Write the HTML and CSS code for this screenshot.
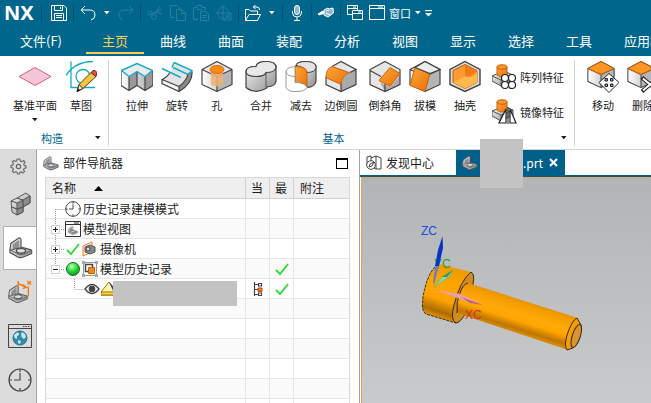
FILE: index.html
```
<!DOCTYPE html>
<html lang="zh-CN">
<head>
<meta charset="utf-8">
<title>NX</title>
<link rel="stylesheet" href="styles.css">
</head>
<body>
<svg class="defs" aria-hidden="true">
  <defs>
    <linearGradient id="metal" x1="0" y1="0" x2="1" y2="1"><stop offset="0" stop-color="#fafafa"/><stop offset="1" stop-color="#8e8e8e"/></linearGradient>
    <linearGradient id="side" x1="0" y1="0" x2="1" y2="0"><stop offset="0" stop-color="#fff"/><stop offset="1" stop-color="#a6a6a6"/></linearGradient>
    <linearGradient id="amber" x1="0" y1="0" x2="1" y2="1"><stop offset="0" stop-color="#ffa838"/><stop offset="1" stop-color="#e9700a"/></linearGradient>
    <radialGradient id="ball" cx=".4" cy=".3" r=".7"><stop offset="0" stop-color="#c8ffc8"/><stop offset=".5" stop-color="#2fe03c"/><stop offset="1" stop-color="#0a9a1a"/></radialGradient>
    <symbol id="bracket" viewBox="0 0 26 24">
      <path d="M1 14 2 7 11 1Q13 1 13 3V11L24 14Q25 15 24.500 18L15 22Q12 23 10 22L1 17Z" fill="url(#metal)" stroke="#555" stroke-width="1.300"/>
      <path d="M4 14V8L11 3 11 12Z" fill="#909090"/><path d="M2 14 11 12 13 11M1 14 11 19Q14 20 24 15" fill="none" stroke="#555"/>
      <ellipse cx="13" cy="15" rx="5" ry="2.500" fill="#ddd" stroke="#444" stroke-width="1.200"/>
    </symbol>
    <symbol id="cube" viewBox="0 0 32 32">
      <path d="M16 1 31 9V24L16 31 1 24V9Z" fill="url(#side)"/>
      <path d="M16 1 31 9 16 16 1 9Z" fill="#e8e8e8"/>
      <path d="M16 16V31L31 24V9Z" fill="#b5b5b5"/>
      <path d="M16 1 31 9V24L16 31 1 24V9ZM1 9 16 16 31 9M16 16V31" fill="none" stroke="#444" stroke-width="1.200" stroke-linejoin="round"/>
    </symbol>
    <symbol id="boss" viewBox="0 0 24 24">
      <path d="M0 12 12 7 21 11V16L9 22 0 17Z" fill="url(#metal)" stroke="#555"/>
      <path d="M0 12 9 16 21 11M9 16V22" fill="none" stroke="#555"/>
      <path d="M5 3V11Q10 15 15 11V3Z" fill="url(#amber)" stroke="#c8600a"/>
      <ellipse cx="10" cy="3" rx="5" ry="2.200" fill="#ff9526" stroke="#c8600a"/>
    </symbol>
    <symbol id="caret" viewBox="0 0 6 4"><path d="M0 0H5.500L2.800 3.200Z" fill="currentColor"/></symbol>
    <symbol id="tick" viewBox="0 0 16 16"><path d="M2 9 6 13 14 3" fill="none" stroke="#2fe03c" stroke-width="2"/></symbol>
    <symbol id="clock" viewBox="0 0 24 24"><circle cx="12" cy="12" r="11" fill="none" stroke="currentColor" stroke-width="1.200"/><path d="M12 1V4M12 20V23M1 12H4M20 12H23M12 5V12H6" fill="none" stroke="currentColor" stroke-width="1.200"/></symbol>
  </defs>
</svg>

<header class="top">
  <div class="quick">
    <span class="brand">NX</span>
    <span class="sep"></span>
    <button class="tool first" aria-label="保存"><svg viewBox="0 0 16 16"><path d="M.5.500H13L15.500 3V15.500H.500ZM3.500.500V5.500H11.500V.500M9.500 2V4M3.500 15V8.500H12.500V15M5 10.500H11M5 12.500H11"/></svg></button>
    <span class="sep"></span>
    <button class="tool" aria-label="撤销"><svg viewBox="0 0 16 16"><path d="M5 1 1 5 5 9M1 5H10Q15 5 15 10 15 14 11 15"/></svg></button>
    <button class="drop" aria-label="撤销列表"><svg><use href="#caret"/></svg></button>
    <button class="tool dim" aria-label="重做"><svg viewBox="0 0 16 16"><path d="M11 1 15 5 11 9M15 5H6Q1 5 1 10 1 14 5 15"/></svg></button>
    <span class="sep"></span>
    <button class="tool dim" aria-label="剪切"><svg viewBox="0 0 16 16"><path d="M15 4 6 8M13 1 8 9M9 7 15 9M6 8 5 8"/><circle cx="3" cy="8" r="2"/><circle cx="7" cy="12" r="2.500"/></svg></button>
    <button class="tool dim" aria-label="复制"><svg viewBox="0 0 16 16"><path d="M5 12.500H.500V.500H7L9.500 3V4M6.500 4.500H12L15.500 8V15.500H6.500ZM11.500 4.500V8.500H15"/></svg></button>
    <button class="tool dim" aria-label="粘贴"><svg viewBox="0 0 16 16"><path d="M5 14.500H.500V2.500H4V.500H9V2.500H12.500V5M3.500 4.500H9.500M7.500 6.500H12L15.500 9V15.500H7.500ZM9 10.500H14M9 12.500H14"/></svg></button>
    <button class="tool dim" aria-label="移动对象"><svg viewBox="0 0 16 16"><circle cx="7" cy="8" r="5.500"/><path d="M7 0V8H0M7 8H15V15H7Z"/><path d="M9 10 13 13M13 10V13H10"/></svg></button>
    <span class="sep"></span>
    <button class="tool" aria-label="打开"><svg viewBox="0 0 16 16"><path d="M.500 15.500V4.500H4L5.500 6H12.500V9M.500 15.500 4 9.500H15.500L12.500 15.500ZM8 2H12Q14.500 2 14.500 5M10.500 0 8.500 2 10.500 4"/></svg></button>
    <button class="drop" aria-label="打开列表"><svg><use href="#caret"/></svg></button>
    <span class="sep"></span>
    <button class="tool" aria-label="语音"><svg viewBox="0 0 16 16"><rect x="5.500" y=".5" width="5" height="9" rx="2.500" fill="#8fb9cb"/><path d="M3.500 6V8Q4 12 8 12T12.500 8V6M8 12V15.500M5 15.500H11"/></svg></button>
    <span class="sep"></span>
    <button class="tool" aria-label="触控"><svg viewBox="0 0 16 16"><path d="M0 9 5 6 7 8 1 10Z" fill="#fff"/><path d="M6 5 10 3 11 4 15 3 15.500 8 10 12 6 10Z" fill="#8fb9cb"/><path d="M8 6 11 5M8 8 12 10"/></svg></button>
    <span class="sep"></span>
    <button class="tool" aria-label="切换窗口"><svg viewBox="0 0 16 16"><path d="M5 9.500H.500V.500H10.500V5M.500 3.500H10M5.500 5.500H15.500V14.500H5.500ZM5.500 8.500H15M6 2H9M11 7H14"/></svg></button>
    <button class="window"><svg viewBox="0 0 16 16"><path d="M.500.500H15.500V14.500H.500ZM.500 3.500H15M9 2H14"/></svg>窗口<svg class="mini"><use href="#caret"/></svg></button>
    <button class="drop" aria-label="自定义"><svg class="over" viewBox="0 0 6 6"><path d="M0 .500H6" stroke="#fff"/><path d="M0 2.500H6L3 5.500Z" fill="#fff"/></svg></button>
  </div>
  <nav class="menu">
    <a href="#">文件(F)</a><a href="#" class="on">主页</a><a href="#">曲线</a><a href="#">曲面</a><a href="#">装配</a><a href="#">分析</a><a href="#">视图</a><a href="#">显示</a><a href="#">选择</a><a href="#">工具</a><a href="#">应用模块</a>
  </nav>
</header>

<section class="ribbon">
  <div class="group build">
    <div class="cmds">
      <button class="cmd wide"><svg viewBox="0 0 32 32"><path d="M0 16 16 7 32 16 16 25Z" fill="#f5c6d8" stroke="#d55c85"/></svg>基准平面<svg class="mini"><use href="#caret"/></svg></button>
      <button class="cmd"><svg viewBox="0 0 32 32"><path d="M1 15Q10 1 28 1M6 1V27H30" fill="none" stroke="#15aacb" stroke-width="1.300"/><circle cx="18" cy="16" r="7" fill="none" stroke="#15aacb" stroke-width="1.300"/><path d="M12 31 14 24 26 12 31 16 18 28Z" fill="#f5c542" stroke="#4a3b12"/><path d="M26 12 28 10Q30 9 32 12L31 16Z" fill="#e05050" stroke="#652020"/><path d="M12 31 14 24 18 28Z" fill="#f5e0b0" stroke="#333"/><path d="M12 31 13 28 15 30Z"/></svg>草图</button>
    </div>
    <div class="caption"><span>构造</span><svg class="mini"><use href="#caret"/></svg></div>
  </div>
  <div class="group basic">
    <div class="cmds">
      <div class="trio">
        <button class="cmd"><svg viewBox="0 0 32 32"><path d="M0 10 8 15 16 11 24 15 32 10V25L24 30 16 25 8 30 0 25Z" fill="url(#side)"/><path d="M8 16 16 11V25L8 30Z" fill="#999"/><path d="M24 16 32 10V25L24 30Z" fill="#999"/><path d="M0 10V25L8 30 16 25 24 30 32 25V10M8 16V30M16 11V25M24 16V30" fill="none" stroke="#444" stroke-width="1.200"/><path d="M.500 10 16 3 31.500 10 24 16 16 11 8 16Z" fill="#ececec" stroke="#15aacb" stroke-width="1.400"/></svg>拉伸</button>
        <button class="cmd"><svg viewBox="0 0 32 32"><path d="M13 2 31 10Q32 23 18 31L1 23V19Q12 14 13 2Z" fill="#e4e4e4"/><path d="M1 19 18 26V31L1 23Z" fill="#f6f6f6"/><path d="M31 11Q31 24 18 31V26Q26 20 27 13Z" fill="#8a8a8a"/><path d="M1 19 18 26Q26 20 27 13M18 26V31L1 23V19Q6 17 9 12M31 11Q32 23 18 31" fill="none" stroke="#444" stroke-width="1.200"/><path d="M1 8 20 17M12 7 27 14M13 2 31 10 27 14M13 2 11 7" fill="none" stroke="#15aacb" stroke-width="1.400"/></svg>旋转</button>
        <button class="cmd"><svg viewBox="0 0 32 32"><use href="#cube"/><path d="M10 10V24Q16 28 22 24V10Z" fill="#efb070" opacity=".85"/><ellipse cx="16" cy="9" rx="7" ry="4" fill="#ff8a12" stroke="#d96a05"/></svg>孔</button>
      </div>
      <div class="trio">
        <button class="cmd"><svg viewBox="0 0 32 32"><path d="M1 11Q1 6 11 6 12 1 21 1 31 1 31 7V21Q30 26 23 26L21 28Q10 34 1 27Z" fill="url(#metal)" stroke="#444" stroke-width="1.200"/><path d="M1 11Q1 6 11 6 12 1 21 1 31 1 31 7 30 12 21 12 20 16 11 16 1 16 1 11Z" fill="#e9e9e9" stroke="#444" stroke-width="1.200"/><path d="M21 12V27" stroke="#555"/></svg>合并</button>
        <button class="cmd"><svg viewBox="0 0 32 32"><path d="M11 5Q12 1 21 1 31 1 31 7V21Q30 26 23 27L11 16Z" fill="url(#metal)" stroke="#444" stroke-width="1.200"/><path d="M11 5Q12 1 21 1 31 1 31 7 30 12 22 12 22 7 11 5Z" fill="#e4e4e4" stroke="#444"/><path d="M10 6Q22 6 22 12V27Q20 22 10 22Z" fill="url(#amber)" stroke="#c8600a"/><path d="M10 6Q1 7 1 11V27Q4 32 11 31 20 31 22 27 20 22 10 22ZM1 11Q2 16 10 16" fill="#fff" stroke="#999"/></svg>减去</button>
        <button class="cmd"><svg viewBox="0 0 32 32"><path d="M16 1 31 9V24L16 31 1 24V14L7 6Z" fill="#e6e6e6"/><path d="M31 9V24L16 31V23Q20 12 25 11Z" fill="#aaa"/><path d="M7 6 16 1 31 9 25 12M31 9V24L16 31 1 24V16M16 23V31" fill="none" stroke="#444" stroke-width="1.200"/><path d="M7 6 24 12Q17 15 16 24L1 17Q1 8 7 6Z" fill="url(#amber)" stroke="#c8600a"/></svg>边倒圆</button>
      </div>
      <div class="trio">
        <button class="cmd"><svg viewBox="0 0 32 32"><path d="M16 1 31 9V24L16 31 1 24V9Z" fill="#e6e6e6"/><path d="M11 22 16 31 31 24V15L21 27Z" fill="#aaa"/><path d="M16 1 31 9V24L16 31 1 24V9ZM1 10 12 16M16 23V31" fill="none" stroke="#444" stroke-width="1.200"/><path d="M21 7 31 13 21 26 10 20Z" fill="url(#amber)" stroke="#c8600a"/></svg>倒斜角</button>
        <button class="cmd"><svg viewBox="0 0 32 32"><use href="#cube"/><path d="M6 7 21 13 16 31 1 25Z" fill="url(#amber)" stroke="#c8600a"/><path d="M6 7 16 1 31 9 21 13Z" fill="#ececec" stroke="#444" stroke-width="1.200"/></svg>拔模</button>
        <button class="cmd"><svg viewBox="0 0 32 32"><path d="M16 1 31 9V24L16 31 1 24V9Z" fill="#ddd" stroke="#444" stroke-width="1.400"/><path d="M16 4 28 10V22L16 28 4 22V10Z" fill="#ff9a32" stroke="#b95a08"/><path d="M16 4V16Q22 18 28 10Z" fill="#f07d14"/><path d="M4 22 16 16Q25 18 28 11V22L16 28Z" fill="#ffb84d"/></svg>抽壳</button>
      </div>
      <div class="stack">
        <button class="row"><svg viewBox="0 0 26 26"><use href="#boss" width="24" height="24"/><g fill="#fff" stroke="#222" stroke-width="1.200"><circle cx="13" cy="14" r="3.500"/><circle cx="20" cy="14" r="3.500"/><circle cx="13" cy="21" r="3.500"/><circle cx="20" cy="21" r="3.500"/></g></svg>阵列特征</button>
        <button class="row"><svg viewBox="0 0 26 26"><use href="#boss" width="24" height="24"/><path d="M14 10V24H7ZM18 10V24H24Z" fill="#fff" stroke="#222" stroke-width="1.200"/><path d="M16 8V25" stroke="#222"/></svg>镜像特征</button>
      </div>
    </div>
    <div class="caption"><span>基本</span><svg class="mini"><use href="#caret"/></svg></div>
  </div>
  <div class="group sync">
    <div class="cmds">
      <button class="cmd"><svg viewBox="0 0 32 32"><use href="#cube" width="28" height="28"/><path d="M14 1 27 8 14 14 1 8Z" fill="#ff9526" stroke="#b95a08"/><path d="M22 13 32 22 22 32 12 22Z" fill="#fff" stroke="#222"/><path d="M18 18H20.500V20.500H18ZM23.500 18H26V20.500H23.500ZM18 23.500H20.500V26H18ZM23.500 23.500H26V26H23.500Z" fill="#999" stroke="#222"/></svg>移动</button>
      <button class="cmd"><svg viewBox="0 0 32 32"><use href="#cube" width="28" height="28"/><path d="M14 1 27 8 14 14 1 8Z" fill="#ff9526" stroke="#b95a08"/><path d="M15 17 31 31M31 17 15 31" stroke="#222" stroke-width="4"/><path d="M16 18 30 30M30 18 16 30" stroke="#fff" stroke-width="2"/></svg>删除</button>
    </div>
  </div>
</section>

<main class="work">
  <nav class="rail">
    <button class="small" aria-label="设置"><svg viewBox="0 0 18 18"><g fill="none" stroke="#666"><circle cx="9" cy="9" r="2.300" stroke-width="1.200"/><path stroke-linejoin="round" stroke-width="1.200" d="M7.500 1H10.500L11 3.300 12.500 4 14.500 2.700 16 4.600 14.500 6.400 15 7.800 17 8.400V10.500L15 11 14.300 12.500 15.400 14.400 13.500 16 11.800 14.600 10.500 15 10 17H8L7.500 15 6 14.500 4 15.600 2.400 13.800 3.600 12 3 10.600 1 10V8L3 7.500 3.600 6 2.500 4 4.300 2.500 6 3.800 7 3.300Z"/></g></svg></button>
    <button aria-label="装配导航器"><svg viewBox="0 0 24 24"><path d="M3 9 9 6 18 1 22 4V11L15 15V20L9 23 4 20Z" fill="url(#metal)" stroke="#555"/><path d="M9 11 15 8 22 4V11L15 15V20L9 23Z" fill="#8c8c8c" stroke="#555"/><path d="M3 9 9 11M15 8V15L9 17 4 15M9 6 15 8" fill="none" stroke="#555" stroke-width="1.200"/></svg></button>
    <button class="on" aria-label="部件导航器"><svg><use href="#bracket"/></svg></button>
    <button aria-label="PMI 导航器"><svg viewBox="0 0 26 26"><use href="#bracket" x="0" y="5" width="22" height="21"/><path d="M11 1V8M11 4 20 8M16 5 20 8 16 9M21 1 25 5M25 1 21 5M22 7V18" fill="none" stroke="#ee7a12" stroke-width="1.500"/></svg></button>
    <button aria-label="网页浏览器"><svg viewBox="0 0 24 24"><path d="M.500.500H23.500V23.500H.500ZM.500 4.500H23" fill="none" stroke="#444"/><path d="M15 2.500H22" stroke="#444" stroke-dasharray="1.500 1"/><circle cx="12" cy="14" r="7" fill="#2f8ba8" stroke="#1f708c"/><path d="M6 11 9 8.500 11 9 11 11 9 12 9 15 6.500 14ZM14 8 17 10 18 13 16 15 13.500 13 13 10ZM10 16 13 17 12 20 10 19Z" fill="#c5e8ef"/></svg></button>
    <button class="dark" aria-label="历史记录"><svg><use href="#clock"/></svg></button>
  </nav>

  <section class="panel">
    <h2><svg><use href="#bracket"/></svg>部件导航器<button class="max" aria-label="最大化"></button></h2>
    <table>
      <thead><tr><th class="name">名称<svg viewBox="0 0 9 5"><path d="M0 5H9L4.500 0Z"/></svg></th><th class="flag">当</th><th class="flag">最</th><th class="note">附注</th></tr></thead>
      <tbody>
        <tr><td><div class="node"><svg class="twig" viewBox="0 0 19 20"><path d="M9.500 10V20M9.500 10.500H19"/></svg><svg class="ic"><use href="#clock"/></svg><span>历史记录建模模式</span></div></td><td></td><td></td><td></td></tr>
        <tr><td><div class="node"><svg class="twig" viewBox="0 0 19 20"><path d="M9.500 0V20M15 10.500H19"/><path class="box" d="M5.500 6.500H13.500V14.500H5.500Z"/><path class="sign" d="M7 10.500H12M9.500 8V13"/></svg><svg class="ic" viewBox="0 0 16 16"><path d="M.500.500H15.500V15.500H.500ZM.500 3.500H15M9 2H14" fill="none" stroke="#333"/><use href="#bracket" x="3" y="5" width="10" height="9"/></svg><span>模型视图</span></div></td><td></td><td></td><td></td></tr>
        <tr><td><div class="node"><svg class="twig" viewBox="0 0 19 20"><path d="M9.500 0V20M15 10.500H19"/><path class="box" d="M5.500 6.500H13.500V14.500H5.500Z"/><path class="sign" d="M7 10.500H12M9.500 8V13"/></svg><svg class="ic"><use href="#tick"/></svg><svg class="ic" viewBox="0 0 16 16"><path d="M1 5 10 1V11L1 15Z" fill="#fff" stroke="#ee7a12"/><path d="M3 6 8 4 13 6V11L8 13 3 11Z" fill="#888" stroke="#555"/><circle cx="6" cy="8" r="2" fill="#ddd" stroke="#444"/></svg><span>摄像机</span></div></td><td></td><td></td><td></td></tr>
        <tr><td><div class="node"><svg class="twig" viewBox="0 0 19 20"><path d="M9.500 0V6M15 10.500H19"/><path class="box" d="M5.500 6.500H13.500V14.500H5.500Z"/><path class="sign" d="M7 10.500H12"/></svg><svg class="ic" viewBox="0 0 16 16"><circle cx="8" cy="8" r="6.500" fill="url(#ball)" stroke="#15702a"/></svg><svg class="ic" viewBox="0 0 16 16"><path d="M1.500 1.500H14.500V14.500H1.500Z" fill="#fff" stroke="#999"/><path d="M0 0H3V3H0ZM13 0H16V3H13ZM0 13H3V16H0ZM13 13H16V16H13Z" fill="#aaa"/><path d="M3.500 3.500H10.500V10.500H3.500Z" fill="none" stroke="#444" stroke-width="1.500"/><path d="M6.500 6.500H12.500V12.500H6.500Z" fill="#f58a1c" stroke="#c65c08"/></svg><span>模型历史记录</span></div></td><td></td><td class="mark"><svg><use href="#tick"/></svg></td><td></td></tr>
        <tr><td><div class="node deep"><svg class="twig" viewBox="0 0 19 20"><path d="M9.500 0V10M9.500 10.500H19"/></svg><svg class="ic" viewBox="0 0 16 16"><path d="M1 8Q8-1 15 8 8 17 1 8Z" fill="#fff" stroke="#444" stroke-width="1.300"/><circle cx="8" cy="8" r="3.300" fill="#444"/></svg><svg class="ic" viewBox="0 0 16 16"><path d="M0 11 8 1 15 9 13 14H0Z" fill="#fff4ae" stroke="#98710a"/><path d="M8 1 15 9 13 12Z" fill="#293c9a"/><path d="M0 11H13V14H0Z" fill="#ffd92e" stroke="#98710a"/></svg><i class="cover"></i></div></td><td class="mark"><svg viewBox="0 0 16 16"><path d="M4.500 1V15M4.500 3.500H8M4.500 8.500H8M4.500 13.500H8M8.500 2.500H11.500V5H8.500ZM8.500 12H11.500V14.500H8.500Z" fill="none" stroke="#444" stroke-width="1.200"/><path d="M8 7H12V10.500H8Z" fill="#f08020" stroke="#a8460a"/></svg></td><td class="mark"><svg><use href="#tick"/></svg></td><td></td></tr>
        <tr><td></td><td></td><td></td><td></td></tr>
        <tr><td></td><td></td><td></td><td></td></tr>
        <tr><td></td><td></td><td></td><td></td></tr>
        <tr><td></td><td></td><td></td><td></td></tr>
        <tr><td></td><td></td><td></td><td></td></tr>
        <tr><td></td><td></td><td></td><td></td></tr>
      </tbody>
    </table>
  </section>

  <section class="stage">
    <div class="tabs">
      <button class="tab"><svg viewBox="0 0 16 16"><path d="M1 2 5 1V6M1 2V9M5 3 10 1V14L8 13M10 1 15 3V14L10 14" fill="none" stroke="#444"/><circle cx="5" cy="10" r="4.300" fill="#fff" stroke="#444"/><path d="M3 12 4 9 8 7 6 11Z" fill="none" stroke="#444"/></svg>发现中心</button>
      <div class="tab on"><svg><use href="#bracket"/></svg><span class="file">.prt</span><button class="close" aria-label="关闭"><svg viewBox="0 0 9 9"><path d="M1 1 8 8M8 1 1 8"/></svg></button><i class="cover"></i></div>
    </div>
    <div class="canvas">
      <svg viewBox="362 178 289 225" preserveAspectRatio="xMinYMin meet" role="img" aria-label="螺栓模型">
        <defs>
          <linearGradient id="shaft" gradientUnits="userSpaceOnUse" x1="523" y1="299" x2="512" y2="334"><stop offset="0" stop-color="#dc9208"/><stop offset=".15" stop-color="#f59c00"/><stop offset=".42" stop-color="#ffaa08"/><stop offset=".6" stop-color="#ffa500"/><stop offset=".82" stop-color="#bd7600"/><stop offset="1" stop-color="#ed9600"/></linearGradient>
          <linearGradient id="head" gradientUnits="userSpaceOnUse" x1="456" y1="267" x2="439" y2="319"><stop offset="0" stop-color="#ee9a00"/><stop offset=".4" stop-color="#ffa600"/><stop offset=".65" stop-color="#ffa200"/><stop offset=".87" stop-color="#ad6c00"/><stop offset="1" stop-color="#f09800"/></linearGradient>
        </defs>
        <path d="M439 264 471 272 Q461 281 454 305 451 318 456 323L426 314Q421 311 423 297 427 275 435 267Z" fill="url(#head)"/>
        <path d="M471 272Q475 274 473 284L466 313Q460 323 456 323 450 320 454 305 460 281 471 272Z" fill="#cf8b24" stroke="#3a2a10"/>
        <path d="M435 267Q427 275 423 297 421 311 426 314L456 323" fill="none" stroke="#3a2a10" stroke-dasharray="3 1"/>
        <path d="M468 283 578 318 568 350 457 313Q456 302 460 293 463 284 468 283Z" fill="url(#shaft)"/>
        <path d="M468 283Q463 284 460 293 456 302 457 313" fill="none" stroke="#3a2a10"/>
        <path d="M577 318 581 325 573 348 567 350Q564 346 567 335 572 320 577 318Z" fill="#f49d08" stroke="#3a2a10"/>
        <ellipse cx="576.300" cy="336" rx="4" ry="12" transform="rotate(18 576.300 336)" fill="#d99430" stroke="#3a2a10"/>
        <text x="434" y="268" fill="#2e9a35">YC</text>
        <path d="M442.500 236 443 248 439 266 435 266 438 250Z" fill="#0634c6"/>
        <path d="M435 266H439L434 285 433 282Z" fill="#6d80bc"/>
        <path d="M434 287 442 277 453 270 450 276 442 282Z" fill="#8ed59a" stroke="#5aa96b" stroke-width=".5"/>
        <path d="M442 277 453 270 447 277Z" fill="#388d61"/>
        <path d="M437 290 461 294 483 305 470 303Z" fill="#eba0a0"/><path d="M461 297 483 305 470 303Z" fill="#bd6666"/>
        <text x="421" y="235" fill="#1548ee">ZC</text>
        <text x="465" y="319" fill="#d5302c">XC</text>
      </svg>
    </div>
  </section>
</main>
</body>
</html>
```
FILE: styles.css
```
* { box-sizing: border-box; }
html, body { height: 100%; }
body {
  margin: 0;
  display: flex;
  flex-direction: column;
  overflow: hidden;
  background: #fff;
  color: #1c1c1c;
  font: 12px/16px "Noto Sans CJK SC", sans-serif;
}
button {
  padding: 0;
  border: 0;
  background: none;
  color: inherit;
  font: inherit;
}
svg { flex: none; }
.defs { position: absolute; width: 0; height: 0; }
.mini { width: 6px; height: 4px; }

.top { flex: none; background: #00668c; color: #fff; }
.quick { display: flex; align-items: center; height: 26px; padding-left: 4px; overflow: hidden; }
.brand { width: 37px; font: bold 20px/24px "Noto Sans", sans-serif; }
.sep { flex: none; width: 1px; height: 18px; margin: 0 2px 0 3px; background: #005070; }
.brand + .sep { margin-left: 0; }
.tool, .drop, .window { display: flex; flex: none; align-items: center; justify-content: center; height: 24px; }
.tool { width: 23px; }
.first { margin-left: 3px; }
.tool svg, .window svg:first-child { width: 16px; height: 16px; fill: none; stroke: currentColor; }
.dim { color: #2a7f9f; }
.drop { width: 15px; }
.drop svg { width: 6px; height: 4px; }
.drop .over { width: 7px; height: 7px; }
.window { gap: 4px; padding-left: 3px; font-size: 11px; }

.menu { display: flex; height: 30px; padding-left: 4px; overflow: hidden; }
.menu a {
  flex: none;
  height: 28px;
  padding: 5px 16px 0;
  color: #fff;
  font-size: 13px;
  line-height: 20px;
  text-decoration: none;
}
.menu .on { color: #ffcf55; border-bottom: 2px solid #ffcf55; }
.menu a:first-child { margin-right: 8px; }

.ribbon { display: flex; flex: none; height: 94px; padding: 4px 0 3px; border-bottom: 1px solid #d4d4d4; overflow: hidden; font-size: 11px; }
.group { display: flex; flex: none; flex-direction: column; justify-content: space-between; border-right: 1px solid #d4d4d4; }
.build { width: 109px; padding-left: 9px; }
.basic { width: 466px; padding-left: 8px; }
.sync { padding-left: 8px; border: 0; }
.cmds { display: flex; }
.trio { display: flex; margin-right: 4px; }
.cmd { display: flex; flex-direction: column; align-items: center; width: 40px; white-space: nowrap; }
.cmd.wide { width: 52px; }
.cmd svg:first-child { width: 32px; height: 33px; margin-bottom: 4px; }
.cmd .mini { margin-top: 5px; }
.stack { display: flex; flex-direction: column; gap: 5px; padding-left: 3px; }
.row { display: flex; align-items: center; gap: 2px; height: 26px; margin-top: 4px; white-space: nowrap; }
.row svg { width: 26px; height: 26px; }
.caption { display: flex; align-items: center; color: #00668c; padding-right: 7px; }
.caption span { flex: 1; text-align: center; }
.build .caption span { padding-right: 10px; }
.build .caption { margin-right: 0; }
.basic .caption span { padding-right: 11px; }
.build .caption span { padding-right: 0; }
.caption .mini { color: #1c1c1c; }

.work { display: flex; flex: 1; min-height: 0; }
.rail { display: flex; flex: none; flex-direction: column; width: 37px; background: #dcdcdc; border-right: 1px solid #a2a2a2; overflow: hidden; }
.rail button { display: flex; flex: none; align-items: center; justify-content: center; height: 44px; padding-left: 3px; }
.rail .small { height: 32px; padding-left: 0; }
.rail svg { width: 24px; height: 24px; }
.rail .small svg { width: 17px; height: 17px; }
.rail .on { margin: 0 -1px 0 3px; padding: 0; background: #fff; border: 1px solid #b0b0b0; border-right: 0; }
.rail .dark { color: #444; }

.panel { flex: none; width: 323px; padding: 0 9px 0 8px; border-right: 1px solid #a2a2a2; overflow: hidden; }
.panel h2 { display: flex; align-items: center; gap: 4px; height: 26px; margin: 0 0 1px; padding: 0 2px 0 0; font-size: 12px; font-weight: 400; }
.panel h2 svg { width: 16px; height: 15px; margin-left: -2px; }
.max { width: 12px; height: 11px; margin-left: auto; border: 1px solid #000; border-top-width: 2px; }
table { width: 100%; table-layout: fixed; border: 1px solid #d8d8d8; border-spacing: 0; }
th { height: 21px; padding: 0 6px; background: #efefef; border-bottom: 1px solid #d0d0d0; border-right: 1px solid #d0d0d0; font-weight: 400; text-align: left; line-height: 20px; }
th svg { width: 9px; height: 5px; margin: 0 0 2px 18px; }
td { height: 20px; padding: 0; border-bottom: 1px solid #e6e6e6; border-right: 1px solid #e6e6e6; }
th:last-child, td:last-child { border-right: 0; }
.name { width: 200px; }
.flag { width: 24px; padding: 0 5px; }
tbody tr:nth-child(even) { background: #fafafa; }
.node { position: relative; display: flex; align-items: center; gap: 1px; height: 19px; white-space: nowrap; }
.node span { margin-left: 1px; }
.twig { width: 19px; height: 20px; margin-right: -1px; fill: none; stroke: #999; stroke-dasharray: 1 1; }
.twig .box { fill: #fff; stroke: #d0d0d0; stroke-dasharray: none; }
.twig .sign { stroke: #222; stroke-dasharray: none; }
.deep { padding-left: 19px; }
.ic { width: 16px; height: 16px; }
.mark { text-align: center; }
.mark svg { display: block; width: 16px; height: 16px; margin: 0 auto; }
.cover { position: absolute; background: #c3c3c3; }
.node .cover { left: 67px; top: 2px; width: 124px; height: 25px; z-index: 1; }

.stage { display: flex; flex: 1; flex-direction: column; min-width: 0; }
.tabs { display: flex; flex: none; height: 27px; border-bottom: 2px solid #00608a; }
.tab { position: relative; display: flex; align-items: center; gap: 4px; width: 96px; padding-left: 6px; }
.tab > svg { width: 16px; height: 16px; }
.tab.on { width: 109px; background: #00608a; color: #fff; }
.file { margin-left: auto; }
.close { display: flex; margin: 0 7px 0 2px; }
.close svg { width: 9px; height: 9px; stroke: #fff; stroke-width: 2; }
.tab .cover { left: 24px; top: -11px; width: 43px; height: 49px; z-index: 1; }
.canvas { flex: 1; min-height: 0; margin-left: 1px; border: solid #f0a050; border-width: 1px 0 0 1px; background: linear-gradient(#b3b4b6, #c9cacc); overflow: hidden; }
.canvas svg { display: block; width: 289px; height: 225px; }
.canvas text { font: 12px "Liberation Sans", sans-serif; }
```
